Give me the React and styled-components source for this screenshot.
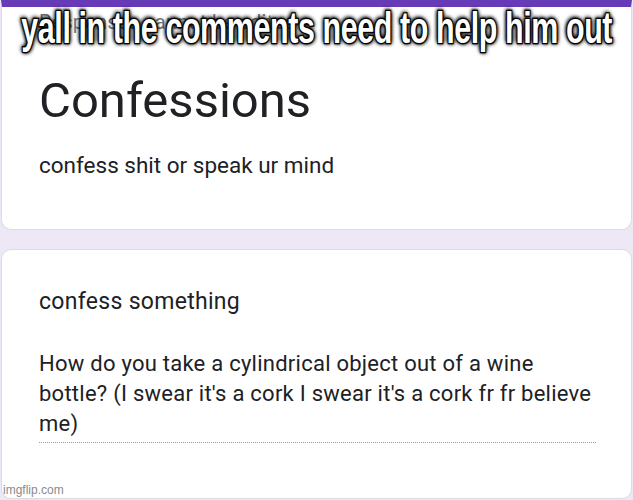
import React from 'react'
import styled, { createGlobalStyle } from 'styled-components'

const GlobalStyle = createGlobalStyle`
  html, body {
    margin: 0;
    padding: 0;
    background: #ede7f6;
    font-family: Roboto, "Liberation Sans", Arial, sans-serif;
  }
`

const Page = styled.div`
  position: relative;
  width: 633px;
  height: 500px;
  overflow: hidden;
  background: #ede7f6;
  display: flex;
  flex-direction: column;
  gap: 19px;
  padding: 0 1px;
  box-sizing: border-box;
`

const Card = styled.section`
  background: #fff;
  border: 1px solid #dadce0;
  border-top: ${p => (p.accent ? '7px solid #673ab7' : '1px solid #dadce0')};
  border-radius: ${p => (p.accent ? '0 0 10px 10px' : '10px')};
  height: ${p => p.h}px;
  box-sizing: border-box;
  padding: ${p => p.pad};
  display: flex;
  flex-direction: column;
`

const Notice = styled.div`
  color: #70757a;
  font-size: 20px;
  line-height: 20px;
  letter-spacing: 0.2px;
`

const Title = styled.h1`
  margin: 0;
  font-weight: 400;
  font-size: 49px;
  line-height: 56px;
  color: #202124;
  margin-top: 41px;
`

const Description = styled.p`
  margin: 22px 0 0;
  font-size: 22.5px;
  line-height: 28px;
  color: #202124;
`

const QuestionTitle = styled.h2`
  margin: 0;
  font-weight: 400;
  font-size: 23px;
  line-height: 28px;
  letter-spacing: 0.3px;
  color: #202124;
`

const Answer = styled.div`
  margin-top: 33px;
  font-size: 22px;
  line-height: 30px;
  letter-spacing: 0.25px;
  color: #202124;
  width: 557px;
  padding-bottom: 3px;
  border-bottom: 1px dotted #9aa0a6;
`

const Watermark = styled.span`
  position: absolute;
  left: 3px;
  bottom: 3px;
  font-size: 12px;
  color: #8a8a8a;
  font-family: "Liberation Sans", Arial, sans-serif;
`

const Caption = styled.div`
  position: absolute;
  top: 6px;
  left: 0;
  right: 0;
  display: flex;
  justify-content: center;
`

const CaptionText = styled.span`
  display: inline-block;
  white-space: nowrap;
  font-family: "Liberation Sans", Arial, sans-serif;
  font-weight: 700;
  font-size: 39px;
  line-height: 44px;
  letter-spacing: -0.5px;
  color: #fff;
  -webkit-text-stroke: 2.4px #000;
  paint-order: stroke fill;
  text-shadow: 0 0 3px #000, 0 0 5px #000, 1px 1px 5px #000, -1px -1px 5px #000;
  transform: scale(0.78, 1.12);
`

export default function App() {
  return (
    <>
      <GlobalStyle />
      <Page>
        <Card accent h={230} pad="5px 0 0 37px">
          <Notice>Responses cannot be edited</Notice>
          <Title>Confessions</Title>
          <Description>confess shit or speak ur mind</Description>
        </Card>
        <Card h={250} pad="38px 0 0 37px">
          <QuestionTitle>confess something</QuestionTitle>
          <Answer>
            How do you take a cylindrical object out of a wine bottle? (I swear it's a cork I swear it's a cork fr fr believe me)
          </Answer>
        </Card>
        <Caption>
          <CaptionText>yall in the comments need to help him out</CaptionText>
        </Caption>
        <Watermark>imgflip.com</Watermark>
      </Page>
    </>
  )
}
